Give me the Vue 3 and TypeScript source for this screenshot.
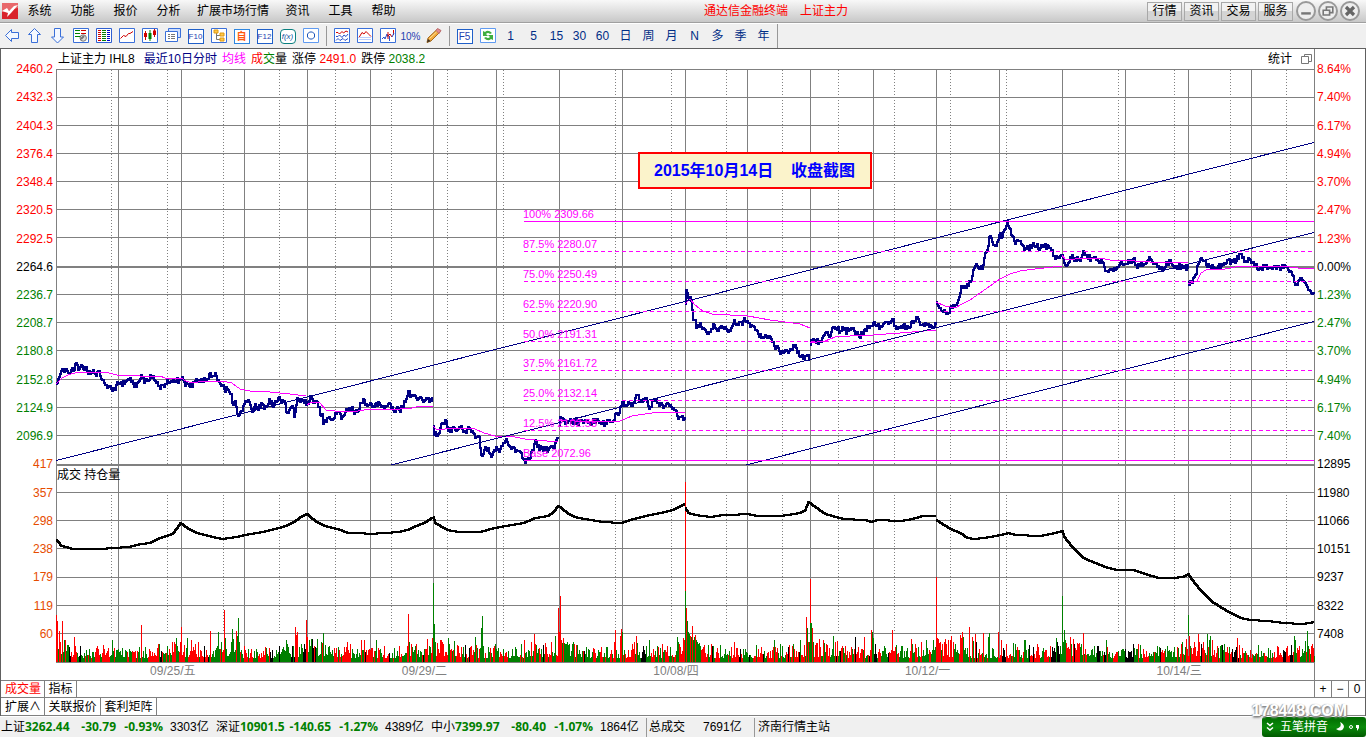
<script setup lang="ts">
interface Shape { d: string; fill?: string; stroke?: string; w?: number }
interface Tool { name: string; shapes?: Shape[]; text?: string; kind?: string }

const menus = ['系统', '功能', '报价', '分析', '扩展市场行情', '资讯', '工具', '帮助']
const panels = ['行情', '资讯', '交易', '服务']

const blue = '#3a6fd8'
const frame = (c = blue): Shape => ({ d: 'M.5 .5H15.5V14.5H.5Z', fill: '#fff', stroke: c })

const navTools: Tool[] = [
  { name: '后退', shapes: [{ d: 'M1.5 7.5L7.5 1.5V4.5H14.5V10.5H7.5V13.5Z', fill: '#f4f8ff', stroke: blue }] },
  { name: '上翻', shapes: [{ d: 'M7.5 .5L13.5 6.5H10.5V14.5H4.5V6.5H1.5Z', fill: '#f4f8ff', stroke: blue }] },
  { name: '下翻', shapes: [{ d: 'M7.5 15L1.5 9H4.5V.5H10.5V9H13.5Z', fill: '#f4f8ff', stroke: blue }] },
  { name: '报表', shapes: [
    frame(),
    { d: 'M2 2.5H7M2 5.5H7M2 8.5H7', stroke: '#008000' },
    { d: 'M8 2.5H13M8 5.5H13', stroke: '#d00000' },
    { d: 'M7 10a3.2 3.2 0 1 0 6.400 0a3.200 3.200 0 1 0 -6.400 0', fill: '#ddd', stroke: '#777' },
    { d: 'M8 11L11 8', stroke: '#777', w: 2 },
  ] },
  { name: '行情列表', shapes: [
    frame('#2f5fd0'),
    { d: 'M2 2.500H5M2 4.500H5M2 6.500H5M2 8.500H5M2 10.500H5M2 12.500H5', stroke: '#d00000' },
    { d: 'M6 2.500H10M6 4.500H10M6 6.500H10M6 8.500H10M6 10.500H10M6 12.500H10', stroke: '#008000' },
    { d: 'M11 2.500H14M11 4.500H14M11 6.500H14M11 8.500H14M11 10.500H14M11 12.500H14', stroke: '#0000d0' },
  ] },
  { name: '分时图', shapes: [frame(), { d: 'M1.500 10.500L4.500 7.500L7 8.500L9.500 5.500H11L14 3.500', stroke: '#d00000' }] },
  { name: 'K线图', shapes: [
    frame(),
    { d: 'M3.500 3V12M12.500 1V9', stroke: '#d00000' }, { d: 'M2 5H5V9H2ZM11 2.500H14V7H11Z', fill: '#d00000' },
    { d: 'M8 2V13', stroke: '#008000' }, { d: 'M6.500 5H9.500V11H6.500Z', fill: '#008000' },
  ] },
  { name: '多窗口', shapes: [
    { d: 'M3.500 .5H15.500V9.500H3.500Z', fill: '#cfe0ff', stroke: blue },
    { d: 'M.5 3.500H12.500V13.500H.5Z', fill: '#fff', stroke: blue },
    { d: 'M3 6.500H5M6 6.500H10M3 8.500H5M6 8.500H10M3 10.500H5M6 10.500H10', stroke: '#777' },
  ] },
  { name: '个股资料 F10', text: 'F10' },
  { name: '板块树', shapes: [
    frame(),
    { d: 'M5.500 5V11.500H9M5.500 7.500H9', stroke: '#777' },
    { d: 'M3 2H7V5H3ZM9 5H13V8H9ZM9 10H13V13H9Z', fill: '#ffc84a', stroke: '#e09a10' },
  ] },
  { name: '自选股', text: '自', kind: 'own' },
  { name: '快讯 F12', text: 'F12' },
  { name: '公式', text: 'f(x)', kind: 'fx' },
  { name: '区间', shapes: [frame('#5f9af0'), { d: 'M4.500 6L6.500 4H9.500L11.500 6V9L9.500 11H6.500L4.500 9Z', stroke: '#1d55b8' }] },
]
const drawTools: Tool[] = [
  { name: '叠加', shapes: [
    frame(),
    { d: 'M2 4.500H4L5.500 6L8 3.500L9.500 5L12 3L14 4', stroke: '#d00000' },
    { d: 'M2 8.500H4L5.500 7L8 9.500L10 7L12 8.500L14 6M2 12.500L4 10.500L6 12.500L9 10.500L11 12.500L14 10.500', stroke: '#2a50c8' },
  ] },
  { name: '统计图', shapes: [
    frame(),
    { d: 'M2 9.500L5 4.500L7 6L9 3.500L12 6.500L14 8.500', stroke: '#d00000' },
    { d: 'M2 11.500H14M2 9.500H14', stroke: '#b9cfff' },
  ] },
  { name: '量能', shapes: [
    frame(),
    { d: 'M2 11L4 9L5 11L7 6L8 9', stroke: '#2a50c8' },
    { d: 'M8 11V4M8 8L10 6L12 9M13.500 2V7', stroke: '#d00000' },
    { d: 'M9.500 8V13M12 9L14 5', stroke: '#2a50c8' },
  ] },
  { name: '涨幅坐标', text: '10%', kind: 'bare' },
  { name: '画线', shapes: [
    { d: 'M1 14.500L2 10L11 1.500L14 4L5 13Z', fill: '#f2a93c', stroke: '#a46a20' },
    { d: 'M10 2.500L11.500 .5L15 2.500L13 5.500Z', fill: '#e58b90', stroke: '#b86a6a' },
    { d: 'M1 14.500L2 11L4.500 13Z', fill: '#3b3025' },
    { d: 'M3.500 10.500L10.500 4', stroke: '#ffe79a' },
  ] },
]
const viewTools: Tool[] = [
  { name: '切换 F5', text: 'F5', kind: 'f5' },
  { name: '刷新', shapes: [
    frame('#5f9af0'),
    { d: 'M3 3V8H8L6 6Q8 4 10 6L12 5Q8 1 5 4ZM13 12V7H8L10 9Q8 11 6 9L4 10Q8 14 11 11Z', fill: '#3fae3f' },
  ] },
]
const periods = ['1', '5', '15', '30', '60', '日', '周', '月', 'N', '多', '季', '年']

/* Axes */
const leftAxis = ['2460.2', '2432.3', '2404.3', '2376.4', '2348.4', '2320.5', '2292.5', '2264.6', '2236.7', '2208.7', '2180.8', '2152.8', '2124.9', '2096.9', '417', '357', '298', '238', '179', '119', '60']
const rightAxis = ['8.64%', '7.40%', '6.17%', '4.94%', '3.70%', '2.47%', '1.23%', '0.00%', '1.23%', '2.47%', '3.70%', '4.94%', '6.17%', '7.40%', '12895', '11980', '11066', '10151', '9237', '8322', '7408']
const tone = (i: number) => (i < 7 ? 'up' : i === 7 ? 'flat' : i < 14 ? 'down' : 'vol')
const days = ['09/25/五', '09/29/二', '10/08/四', '10/12/一', '10/14/三']

/* Plot space: x 56..1315, y 69..663 */
const X0 = 56, Y0 = 69, W = 1259, H = 594
const solidX = [56, 118, 181, 244, 307, 370, 433, 496, 559, 622, 685, 747, 810, 873, 936, 999, 1062, 1125, 1188, 1251, 1314]
const dottedX = [111, 167, 223, 279, 335, 391, 447, 503, 615, 671, 726, 782, 838, 894, 950, 1006, 1118, 1174, 1230, 1286]
const gridY = [69, 97, 125, 153, 181, 209, 237, 294, 322, 350, 379, 407, 435, 492, 520, 548, 577, 605, 633, 662]
const solidPath = solidX.map(x => `M${x + 0.5} 69V663`).join('') + gridY.map(y => `M56 ${y + 0.5}H1315`).join('')
const dottedPath = dottedX.map(x => `M${x + 0.5} 70V266M${x + 0.5} 268V464M${x + 0.5} 495V633`).join('')

const fib = [
  { label: '100% 2309.66', y: 221 }, { label: '87.5% 2280.07', y: 251 }, { label: '75.0% 2250.49', y: 281 },
  { label: '62.5% 2220.90', y: 311 }, { label: '50.0% 2191.31', y: 341 }, { label: '37.5% 2161.72', y: 370 },
  { label: '25.0% 2132.14', y: 400 }, { label: '12.5% 2102.55', y: 430 }, { label: 'Base 2072.96', y: 460 },
]
const at = (x: number, y: number) => ({ left: `${((x - X0) / W) * 100}%`, top: `${((y - Y0) / H) * 100}%` })
const fibDash = fib.slice(1, 8).map(f => `M524 ${f.y + 0.5}H1314`).join('')

const priceDays = [
  '56,384 58,379 60,374 63,371 65,369 67,371 69,373 71,370 73,371 75,364 77,365 79,369 82,366 84,370 86,367 88,374 92,372 95,374 98,371 100,376 103,380 106,385 110,386 112,391 114,389 117,382 120,383 124,384 127,380 130,378 133,384 136,387 138,382 140,379 141,375 144,383 147,381 150,375 152,378 155,381 158,386 160,389 162,385 164,387 167,380 170,382 173,379 176,381 181,378',
  '181,378 184,382 187,384 190,387 193,382 196,379 200,382 204,378 208,379 210,373 213,376 216,376 219,382 221,386 224,389 228,390 231,394 232,403 235,401 238,416 240,412 242,411 244,404 246,401 250,405 252,412 255,404 258,410 261,403 264,409 267,406 269,399 272,406 275,401 279,397 281,403 284,401 286,412 289,410 293,408 294,417 296,405 297,398 300,402 304,403 307,402',
  '307,402 309,401 311,396 313,403 316,401 319,407 320,415 322,414 323,424 327,418 330,419 333,419 335,413 338,412 342,417 345,412 350,408 353,411 358,411 360,403 363,399 365,405 370,403 373,406 376,403 380,405 385,407 390,404 393,410 396,409 399,410 402,407 405,402 408,391 410,397 413,396 417,400 420,397 424,401 426,398 429,402 432,397',
  '433,426 434,435 438,434 440,428 443,423 445,420 447,427 450,432 453,427 456,431 460,427 463,432 467,429 470,429 473,433 475,438 477,437 479,437 480,448 482,456 484,450 488,448 490,454 492,455 494,450 500,449 502,446 504,443 506,439 508,445 512,447 515,452 520,452 522,458 525,463 527,459 530,458 532,450 535,440 537,447 541,449 544,447 547,452 550,447 553,448 555,443 558,439',
  '559,426 560,417 563,419 566,423 570,419 573,424 575,419 578,425 580,420 583,423 586,421 590,424 593,419 596,421 600,423 605,423 608,421 611,422 614,420 615,414 618,415 620,407 623,402 625,405 628,402 631,406 634,402 636,395 638,395 640,401 643,399 646,398 649,409 652,401 655,400 660,405 664,406 668,404 671,407 674,410 677,416 680,417 683,420 685,420',
  '685,304 686,290 688,298 690,297 692,310 693,320 695,320 696,328 700,323 703,328 707,334 711,329 713,324 716,329 719,328 722,328 727,331 731,328 734,320 737,324 741,322 745,321 748,323 751,325 755,330 758,334 761,338 764,337 768,338 771,339 774,346 778,348 780,354 784,352 788,353 791,349 794,347 798,351 800,357 803,359 806,356 808,355 810,360',
  '810,345 812,341 815,340 819,342 822,338 825,333 828,335 831,332 833,327 836,328 840,331 843,330 848,331 852,329 856,333 859,337 862,333 865,329 869,328 873,323 877,326 881,327 885,322 889,322 892,319 895,326 899,328 903,325 906,329 909,328 911,322 914,321 916,317 919,322 922,325 926,325 929,327 932,328 936,325',
  '936,302 940,308 942,311 945,312 948,313 950,307 953,305 956,305 959,297 961,286 964,286 966,288 969,281 971,281 973,270 976,264 979,269 982,269 984,258 987,250 989,237 992,242 995,246 998,240 1000,233 1002,237 1004,230 1007,221 1009,228 1012,236 1015,244 1019,241 1022,245 1024,250 1027,246 1029,250 1033,243 1036,246 1040,248 1044,246 1048,246 1051,250 1054,256 1058,257 1062,256',
  '1062,255 1065,265 1068,263 1071,258 1075,258 1079,260 1082,255 1084,252 1087,257 1091,258 1097,259 1102,262 1104,267 1106,271 1110,269 1114,268 1118,267 1121,262 1125,264 1130,260 1133,259 1136,265 1140,266 1145,264 1150,259 1153,264 1156,264 1160,269 1164,268 1167,262 1171,263 1174,268 1178,266 1183,268 1188,269',
  '1188,282 1192,283 1195,275 1198,264 1201,258 1205,261 1209,267 1214,268 1218,266 1220,268 1225,264 1228,260 1232,262 1236,261 1240,254 1242,258 1245,262 1248,258 1252,263 1255,265 1259,269 1264,267 1268,268 1273,267 1277,267 1281,267 1285,266 1288,270 1292,275 1295,285 1298,281 1302,280 1306,285 1309,290 1312,294 1314,292',
]
const averageDays = [
  '56,384 62,378 68,375 78,372 105,372 117,375 135,375 140,376 160,376 165,378 181,378',
  '181,378 186,381 192,383 204,381 222,381 232,383 240,389 250,391 270,392 290,394 306,396',
  '307,405 312,402 320,403 326,410 335,411 358,411 370,409 400,409 412,408 420,406 433,406',
  '433,426 437,430 445,429 458,428 475,429 484,433 495,436 515,437 525,439 535,440 558,442',
  '559,420 575,421 600,421 620,421 632,416 645,414 660,412 685,412',
  '685,304 690,299 695,305 703,311 712,314 730,315 748,316 770,320 800,324 810,328',
  '810,343 825,341 835,337 850,336 873,335 900,333 936,330',
  '936,302 945,306 955,308 962,304 970,300 980,293 990,286 1000,279 1010,274 1020,271 1035,269 1062,266',
  '1062,255 1065,259 1075,259 1085,258 1100,258 1110,260 1135,261 1150,262 1180,262 1188,263',
  '1188,284 1197,281 1201,273 1206,270 1225,269 1235,267 1260,266 1290,267 1305,269 1314,268',
]
const holdings = [
  '56,540 58,542 61,546 66,547 72,549 85,549 100,549 113,548 128,547 140,544 150,543 157,539 166,536 172,534 176,529 180,523 182,524 188,529 197,533 208,536 222,539 236,537 245,535 262,532 275,529 285,526 295,521 302,516 307,514 310,517 318,523 325,526 340,530 348,533 361,533 368,534 385,533 398,532 407,530 413,527 421,524 427,521 433,517',
  '433,517 435,523 440,526 447,530 458,532 480,532 490,529 505,526 523,523 535,518 548,516 553,512 558,506 561,508 567,513 574,517 590,520 603,522 621,523 633,519 645,516 660,513 672,510 685,504',
  '685,508 688,513 695,515 710,517 722,515 730,515 747,514 757,516 780,516 800,513 805,510 808,502 815,507 825,514 843,519 865,520 871,522 877,520 900,521 912,519 922,516 936,516',
  '936,520 950,529 960,533 967,538 975,539 990,537 1000,535 1008,533 1015,535 1040,536 1055,533 1062,531 1064,537 1072,547 1083,558 1095,563 1105,567 1117,570 1133,570 1142,573 1158,578 1172,578 1182,577 1188,574 1192,580 1200,590 1212,602 1225,610 1240,618 1250,620 1268,621 1283,623 1303,624 1314,622',
]

function rng(seed: number) {
  let s = seed
  return () => {
    s = (s * 1103515245 + 12345) % 2147483648
    return s / 2147483648
  }
}
const parse = (s: string) => s.split(' ').map(p => p.split(',').map(Number) as [number, number])

/* Tick-by-tick trace: one level per pixel column around the listed turning points */
const tick = rng(17)
const pricePath = priceDays.map(day => {
  const pts = parse(day)
  let d = `M${pts[0][0]} ${pts[0][1]}`
  for (let i = 1; i < pts.length; i++) {
    const [ax, ay] = pts[i - 1]
    const [bx, by] = pts[i]
    for (let x = ax + 1; x <= bx; x++) {
      const wob = x === bx ? 0 : (tick() - 0.5) * 6
      d += `H${x}V${Math.round(ay + ((by - ay) * (x - ax)) / (bx - ax) + wob)}`
    }
  }
  return d
}).join('')

/* Open interest moves in whole-pixel steps */
const holdingPath = holdings.map(line => {
  const pts = parse(line)
  let d = `M${pts[0][0]} ${pts[0][1]}`
  for (let i = 1; i < pts.length; i++) {
    const [ax, ay] = pts[i - 1]
    const [bx, by] = pts[i]
    for (let x = ax + 1; x <= bx; x++) d += `H${x}V${Math.round(ay + ((by - ay) * (x - ax)) / (bx - ax))}`
  }
  return d
}).join('')

/* Volume columns */
type Tint = 'r' | 'g' | 'k'
const peaks = '56r47 57r41 59r31 62r41 65r22 68g17 74r25 75r16 103r17 112g22 141r37 159g18 181r35 180r20 187g24 198r20 210r31 218g30 221g20 224r52 225g24 231g20 232g33 233g23 236r31 237g26 238g44 239g20 244r16 269r14 286g22 287g18 295r35 296r27 297r30 306r42 307r25 314r16 321g20 323g29 325g17 347r20 350r18 361r22 364r22 376g22 384r16 408r48 409g20 432r24 433g79 434g38 435g20 442r20 448g24 449g18 454g21 475g25 476r17 481g34 482g46 483g16 494r16 495g18 521g18 524r22 531r20 534r28 535r18 555g26 558r54 559r30 560r66 561r22 562g19 566g18 574r18 586g15 614r20 615r32 620r26 621r33 622g30 632r18 634r20 636r26 637g19 649g22 658r15 677g25 678g20 679r18 684r22 686r54 687g41 688g30 689g28 690r26 691g25 692r36 693g22 694g25 695r27 696g22 697g20 698g18 700g16 712k16 720g17 731r15 734r20 756g17 774g22 780g18 800g22 806r45 807g34 808r20 809g20 811g39 812r34 813g20 817r19 819r23 823r22 826r18 833g26 835r20 837r21 855k25 864r25 871r32 872g30 873g24 875k18 884g16 892r32 896g17 911r23 915r18 937r24 940r20 946r18 950r22 951r26 955g18 960r27 961r24 962r30 963g25 969r35 972r25 973g21 975r28 976k20 983r29 988g25 989g29 998r30 1001r22 1006r18 1013g19 1015g18 1024g22 1025g22 1056g24 1060g16 1063g20 1064g32 1065g22 1070r25 1071g18 1073r23 1074k18 1083r29 1094g16 1106g22 1133k18 1138r18 1140g17 1160k14 1182g20 1189r26 1190g16 1194r20 1198r28 1199r20 1203r20 1207g28 1209g22 1210g26 1212r22 1218g14 1220g16 1224g18 1237r24 1239r17 1258g17 1277r16 1287r16 1294g26 1295g22 1307g31 1308g16 1311r16 1312r18 1313r14'
const peakAt = new Map<number, [Tint, number]>()
for (const p of peaks.split(' ')) {
  const m = /^(\d+)([rgk])(\d+)$/.exec(p)
  if (m) peakAt.set(+m[1], [m[2] as Tint, +m[3]])
}
const roll = rng(91)
const volume: Record<Tint, string> = { r: '', g: '', k: '' }
let tint: Tint = 'r'
for (let x = 56; x < 1315; x++) {
  const phase = ((x - 56) % 126) / 126
  const level = 9 + 8 * Math.pow(Math.abs(phase - 0.5) * 2, 2)
  if (roll() > 0.5) {
    const c = roll()
    tint = c < 0.46 ? 'r' : c < 0.93 ? 'g' : 'k'
  }
  let h = Math.round(2 + level * (0.2 + Math.pow(roll(), 1.5) * 1.2))
  let c: Tint = tint
  const pk = peakAt.get(x)
  if (pk) { c = pk[0]; h = pk[1] }
  volume[c] += `M${x + 0.5} ${662 - h}V662`
}
volume.r += 'M685.5 482V591M810.5 579V623M936.5 577V662'
volume.g += 'M685.5 591V662M810.5 623V662M1062.5 596V662M1188.5 615V636'

const indices = [
  { name: '上证', price: '3262.44', diff: '-30.79', pct: '-0.93%', amount: '3303亿' },
  { name: '深证', price: '10901.5', diff: '-140.65', pct: '-1.27%', amount: '4389亿' },
  { name: '中小', price: '7399.97', diff: '-80.40', pct: '-1.07%', amount: '1864亿' },
]
</script>

<template>
  <div class="app">
    <header class="titlebar">
      <nav class="menu">
        <svg class="logo" viewBox="0 0 16 16" aria-hidden="true">
          <path d="M0 0H16V16H0Z" fill="#d9232b" />
          <path d="M0 0H16V5L0 9Z" fill="#e8696c" />
          <path d="M0 8L5 5L7 8L12 3L16 2L9 10L5 14L6 10L3 9Z" fill="#fff" />
        </svg>
        <button v-for="m in menus" :key="m" type="button" class="menu-item" :class="{ wide: m.length > 2 }">{{ m }}</button>
      </nav>
      <div class="caption"><span>通达信金融终端</span><span>上证主力</span></div>
      <div class="controls">
        <button v-for="p in panels" :key="p" type="button" class="panel">{{ p }}</button>
        <button type="button" class="round first" aria-label="最小化">
          <svg viewBox="0 0 20 20"><path d="M4 13H16" stroke="#777" stroke-width="3" /></svg>
        </button>
        <button type="button" class="round" aria-label="还原">
          <svg viewBox="0 0 20 20" fill="none" stroke="#777" stroke-width="2"><path d="M8 9V5H16V12H12" /><path d="M4 9H12V15H4Z" /></svg>
        </button>
        <button type="button" class="round" aria-label="关闭">
          <svg viewBox="0 0 20 20"><path d="M5 5L15 15M15 5L5 15" stroke="#666" stroke-width="4" /></svg>
        </button>
      </div>
    </header>

    <div class="toolbar">
      <template v-for="(group, g) in [navTools, drawTools, viewTools]" :key="g">
        <button v-for="t in group" :key="t.name" type="button" class="tool" :aria-label="t.name">
          <svg v-if="t.shapes" viewBox="0 0 16 16" aria-hidden="true">
            <path v-for="(s, i) in t.shapes" :key="i" :d="s.d" :fill="s.fill ?? 'none'" :stroke="s.stroke ?? 'none'" :stroke-width="s.w ?? 1" />
          </svg>
          <span v-else class="glyph" :class="t.kind">{{ t.text }}</span>
        </button>
        <i v-if="g < 2" class="divider"></i>
      </template>
      <button v-for="p in periods" :key="p" type="button" class="tool period">{{ p }}</button>
      <i class="divider end"></i>
    </div>

    <main class="work">
      <section class="chart">
        <div class="axis left">
          <span v-for="(v, i) in leftAxis" :key="i" :class="tone(i)">{{ v }}</span>
        </div>
        <div class="center">
          <div class="legend">
            <span>上证主力 IHL8</span>
            <span class="navy range">最近10日分时</span>
            <span class="magenta">均线</span>
            <span><b class="up">成</b><b class="down">交</b><b>量</b></span>
            <span>涨停 <b class="up">2491.0</b></span>
            <span>跌停 <b class="down">2038.2</b></span>
            <span class="stat">统计</span>
            <button type="button" class="float" aria-label="浮动窗口">
              <svg viewBox="0 0 11 11" fill="#fff" stroke="#777"><path d="M3.5 .5H10.5V7.5H3.5Z" /><path d="M.5 2.500H7.500V9.500H.5Z" /></svg>
            </button>
          </div>
          <div class="plot">
            <svg class="canvas" viewBox="56 69 1259 594" preserveAspectRatio="none" role="img" aria-label="最近10日分时走势">
              <g fill="none" shape-rendering="crispEdges">
                <path :d="solidPath" stroke="#808080" />
                <path d="M56 267H1315M56 465H1315" stroke="#808080" stroke-width="2" />
                <path :d="dottedPath" stroke="#808080" stroke-dasharray="1 2" />
                <path :d="volume.r" stroke="#ff0000" />
                <path :d="volume.g" stroke="#008000" />
                <path :d="volume.k" stroke="#000000" />
                <path d="M56 662.5H1315" stroke="#808080" />
                <path :d="holdingPath" stroke="#000" stroke-width="2" />
                <path :d="pricePath" stroke="#000084" stroke-width="2" />
                <polyline v-for="a in averageDays" :key="a" :points="a" stroke="#ff00ff" />
                <path d="M56 460.500L1314 142.500M391 465L1314 232.500M746 465L1314 321.500" stroke="#000084" />
                <path d="M524 221.500H1314M524 460.500H1314" stroke="#ff00ff" />
                <path :d="fibDash" stroke="#ff00ff" stroke-dasharray="4 3" />
              </g>
            </svg>
            <span v-for="f in fib" :key="f.label" class="fib" :style="at(523, f.y - 7)">{{ f.label }}</span>
            <span class="pane-title" :style="at(57, 475)">成交 持仓量</span>
            <div class="note" :style="at(638, 152)">2015年10月14日&nbsp;&nbsp;&nbsp; 收盘截图</div>
          </div>
        </div>
        <div class="axis right">
          <span v-for="(v, i) in rightAxis" :key="i" :class="i > 13 ? 'flat' : tone(i)">{{ v }}</span>
        </div>
      </section>

      <div class="dates">
        <div class="date-track"><span v-for="d in days" :key="d">{{ d }}</span></div>
      </div>
      <div class="tabs first">
        <button type="button" class="tab w3 active">成交量</button>
        <button type="button" class="tab w2">指标</button>
        <div class="zoom">
          <button type="button">+</button><button type="button">−</button><button type="button">0</button>
        </div>
      </div>
      <div class="tabs second">
        <button type="button" class="tab w3">扩展∧</button>
        <button type="button" class="tab w4">关联报价</button>
        <button type="button" class="tab w4">套利矩阵</button>
      </div>
    </main>

    <footer class="status">
      <div v-for="x in indices" :key="x.name" class="index">
        <span>{{ x.name }}</span><b>{{ x.price }}</b><b class="num">{{ x.diff }}</b><b class="num">{{ x.pct }}</b><span class="amount">{{ x.amount }}</span>
      </div>
      <div class="total"><span>总成交</span><span>7691亿</span></div>
      <div class="station">济南行情主站</div>
      <div class="ime">
        <svg class="chev" viewBox="0 0 8 10" fill="none" stroke="#fff" stroke-width="1.500"><path d="M1 1L4 3.500L7 1M1 5.500L4 8L7 5.500" /></svg>
        <span>五笔拼音</span>
        <svg class="moon" viewBox="0 0 26 12"><path d="M6 1Q9 6 2 8Q8 12 10 6Q10 3 6 1Z" fill="#fff" /><circle cx="17" cy="6" r="1.500" fill="none" stroke="#fff" /><path d="M22 4H25V7L23 10V7H22Z" fill="#fff" /></svg>
      </div>
      <div class="mark">178448.COM</div>
    </footer>
  </div>
</template>

<style>
html, body { margin: 0; height: 100%; }
</style>

<style scoped>
.app {
  height: 100vh;
  display: flex;
  flex-direction: column;
  background: #fff;
  color: #000;
  font: 12px/16px "Liberation Sans", "Noto Sans CJK SC", sans-serif;
  overflow: hidden;
  white-space: nowrap;
}
button { font: inherit; color: inherit; padding: 0; margin: 0; border: 0; background: none; }
b { font-weight: normal; }
.titlebar {
  flex: none;
  box-sizing: border-box;
  height: 23px;
  display: flex;
  align-items: center;
  justify-content: space-between;
  background: linear-gradient(#f8f8f8, #c8c8c8);
  border-bottom: 1px solid #a0a0a0;
}
.menu { display: flex; align-items: center; }
.logo { width: 16px; height: 16px; margin: 0 0 0 2px; }
.menu-item { width: 43px; line-height: 22px; text-align: center; }
.menu-item.wide { width: 86px; }
.caption { display: flex; gap: 12px; color: #f00; }
.controls { display: flex; align-items: center; gap: 2px; padding-right: 6px; }
.panel {
  box-sizing: border-box;
  width: 35px;
  height: 19px;
  line-height: 17px;
  border: 1px solid #a8a8a8;
  background: linear-gradient(#f2f2f2 50%, #d4d4d4 50%);
}
.round {
  box-sizing: border-box;
  width: 20px;
  height: 20px;
  border: 2px solid #999;
  border-radius: 50%;
  background: #eee;
}
.round.first { margin-left: 1px; }
.round svg { display: block; width: 16px; height: 16px; }

.toolbar {
  flex: none;
  box-sizing: border-box;
  height: 26px;
  display: flex;
  align-items: center;
  background: #f0f0f0;
  border-top: 1px solid #fff;
  border-bottom: 1px solid #606060;
}
.tool { width: 23px; height: 24px; display: flex; align-items: center; justify-content: center; }
.tool svg { width: 16px; height: 16px; }
.divider { width: 1px; height: 20px; margin: 0 3px 0 4px; background: #989898; }
.divider.end { height: 24px; margin-left: 2px; }
.period { font-size: 12px; color: #002d86; }
.glyph {
  box-sizing: border-box;
  width: 16px;
  height: 15px;
  border: 1px solid #1f5fc8;
  background: #fff;
  color: #1f3fb0;
  font-size: 8px;
  line-height: 13px;
  display: flex;
  justify-content: center;
}
.glyph.own { border-color: #2f86e0; color: #ff5a10; font-size: 10px; font-weight: bold; }
.glyph.fx { border-color: #0a7f7f; border-radius: 4px; font-style: italic; color: #0a4f9f; }
.glyph.bare { border: 0; background: none; width: auto; font-size: 10px; line-height: 15px; }
.glyph.f5 { font-size: 10px; }

.work { flex: 1; min-height: 0; display: flex; flex-direction: column; border-left: 1px solid #606060; border-right: 1px solid #606060; }
.chart { flex: 1; min-height: 0; display: grid; grid-template-columns: 55px 1fr 50px; }
.axis { display: flex; flex-direction: column; padding: 6px 0 15px; }
.axis span { flex: 1; display: flex; align-items: center; }
.axis.left span { justify-content: flex-end; padding-right: 3px; }
.axis.right span { padding-left: 2px; }
.up { color: #f00; }
.flat { color: #000; }
.down { color: #008000; }
.vol { color: #e64c00; }
.navy { color: #000084; }
.magenta { color: #f0f; }
.center { min-width: 0; display: flex; flex-direction: column; }
.legend {
  flex: none;
  box-sizing: border-box;
  height: 20px;
  display: flex;
  align-items: center;
  gap: 5px;
  padding: 0 2px;
  border-right: 1px solid #808080;
}
.range { margin-left: 4px; }
.stat { margin-left: auto; }
.float { margin-left: 4px; width: 11px; height: 14px; }
.float svg { display: block; width: 11px; height: 11px; }
.plot { position: relative; flex: 1; min-height: 0; }
.canvas { position: absolute; width: 100%; height: 100%; }
.fib { position: absolute; font-size: 11px; line-height: 14px; margin-top: -7px; color: #f0f; }
.pane-title { position: absolute; margin-top: -8px; }
.note {
  position: absolute;
  border: 2px solid #f00;
  background: #fbf3cb;
  color: #00f;
  font-size: 16px;
  font-weight: bold;
  line-height: 33px;
  padding: 0 15px 0 14px;
}

.dates { flex: none; height: 17px; line-height: 17px; padding-left: 55px; border-bottom: 1px solid #808080; color: #808080; display: flex; }
.date-track { flex: 1; display: grid; grid-template-columns: repeat(5, 1fr); margin-right: 50px; border-right: 1px solid #808080; text-align: center; }
.date-track span { padding-right: 18px; }
.tabs { flex: none; display: flex; padding-left: 1px; border-bottom: 1px solid #808080; }
.tabs.first { height: 16px; }
.tabs.second { height: 17px; }
.tab { box-sizing: border-box; border-right: 1px solid #808080; text-align: center; }
.tab.active { color: #f00; }
.tab.w2 { width: 32px; }
.tab.w3 { width: 43px; }
.tab.w4 { width: 56px; }
.zoom { margin-left: auto; width: 50px; display: flex; border-left: 1px solid #808080; }
.zoom button { flex: 1; }
.zoom button + button { border-left: 1px solid #808080; }

.status {
  position: relative;
  flex: none;
  box-sizing: border-box;
  height: 21px;
  display: flex;
  background: #f0f0f0;
  border-top: 1px solid #fff;
  padding-left: 1px;
  line-height: 20px;
}
.index { display: grid; grid-template-columns: 24px 48px 43px 47px 53px; }
.index b { font: bold 12px/20px "Open Sans", sans-serif; color: #008000; }
.index .num { text-align: right; }
.amount { padding-left: 7px; }
.total { display: flex; gap: 18px; width: 105px; border-left: 1px solid #989898; padding-left: 2px; margin-top: 1px; line-height: 19px; }
.station { border-left: 1px solid #989898; padding-left: 3px; margin-top: 1px; line-height: 19px; }
.ime {
  margin-left: auto;
  width: 104px;
  display: flex;
  align-items: center;
  gap: 6px;
  box-sizing: border-box;
  padding-left: 4px;
  border-radius: 3px;
  background: linear-gradient(#006a00, #0a8a0a 50%, #005a00);
  color: #fff;
}
.chev { width: 8px; height: 10px; }
.moon { width: 26px; height: 12px; }
.mark {
  position: absolute;
  right: 19px;
  top: -15px;
  font: bold 16px/18px "Liberation Sans", sans-serif;
  color: #fff;
  text-shadow: 1px 1px 1px #888, -1px 0 1px #aaa, 0 2px 2px #999;
}
</style>
